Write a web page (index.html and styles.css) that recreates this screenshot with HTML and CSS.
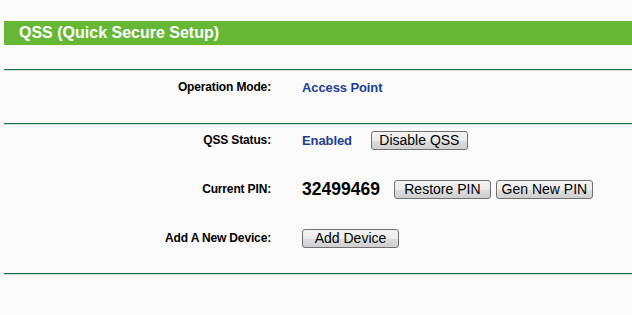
FILE: index.html
```html
<!DOCTYPE html>
<html lang="en">

<head>
    <meta charset="UTF-8">
    <title>QSS</title>
    <link rel="stylesheet" href="styles.css">
</head>

<body>
    <div class="page">
        <div class="title-bar">QSS (Quick Secure Setup)</div>

        <div class="rule"></div>

        <div class="rows rows-mode">
            <div class="label">Operation Mode:</div>
            <div class="value"><span class="blue">Access Point</span></div>
        </div>

        <div class="rule"></div>

        <div class="rows rows-qss">
            <div class="label">QSS Status:</div>
            <div class="value">
                <span class="blue">Enabled</span>
                <input type="button" class="btn btn-status" value="Disable QSS">
            </div>

            <div class="label">Current PIN:</div>
            <div class="value">
                <span class="pin">32499469</span>
                <input type="button" class="btn btn-pin" value="Restore PIN">
                <input type="button" class="btn btn-next" value="Gen New PIN">
            </div>

            <div class="label">Add A New Device:</div>
            <div class="value">
                <input type="button" class="btn" value="Add Device">
            </div>
        </div>

        <div class="rule"></div>
    </div>
</body>

</html>
```

FILE: styles.css
```css
body {
    margin: 0;
    padding: 0;
    background-color: #fafafa;
    font-family: "Liberation Sans", Arial, sans-serif;
    color: #000;
}

.page {
    padding: 21px 0 0 4px;
}

.title-bar {
    height: 24px;
    line-height: 24px;
    padding-left: 15px;
    background-color: #66b834;
    /* 绿色标题栏 */
    color: #fff;
    font-size: 16px;
    font-weight: bold;
}

.rule {
    margin-top: 24px;
    border-top: 1px solid #1e6a48;
    border-bottom: 1px solid #cfe2d6;
}

.rows {
    display: grid;
    grid-template-columns: 267px auto;
    grid-auto-rows: 24px;
    column-gap: 31px;
    align-items: center;
}

.rows-mode {
    padding: 4px 0 0;
}

.rows-mode + .rule {
    margin-top: 24px;
}

.rows-qss {
    padding: 3px 0 0;
    row-gap: 25px;
}

.rows-qss + .rule {
    margin-top: 23px;
}

.label {
    text-align: right;
    font-size: 12px;
    font-weight: bold;
    letter-spacing: -0.15px;
}

.value {
    display: flex;
    align-items: center;
}

.blue {
    color: #1c3e94;
    font-size: 13px;
    font-weight: bold;
    letter-spacing: -0.1px;
}

.pin {
    font-size: 17.5px;
    font-weight: bold;
}

.btn {
    width: 97px;
    height: 19px;
    padding: 0;
    border: 1px solid #707070;
    border-radius: 3px;
    background: linear-gradient(#f3f3f3 0%, #ebebeb 50%, #dddddd 51%, #cfcfcf 100%);
    font-family: "Liberation Sans", Arial, sans-serif;
    font-size: 14px;
    color: #000;
    cursor: pointer;
}

.btn-status {
    margin-left: 19px;
}

.btn-pin {
    margin-left: 14px;
}

.btn-next {
    margin-left: 5px;
}
```
